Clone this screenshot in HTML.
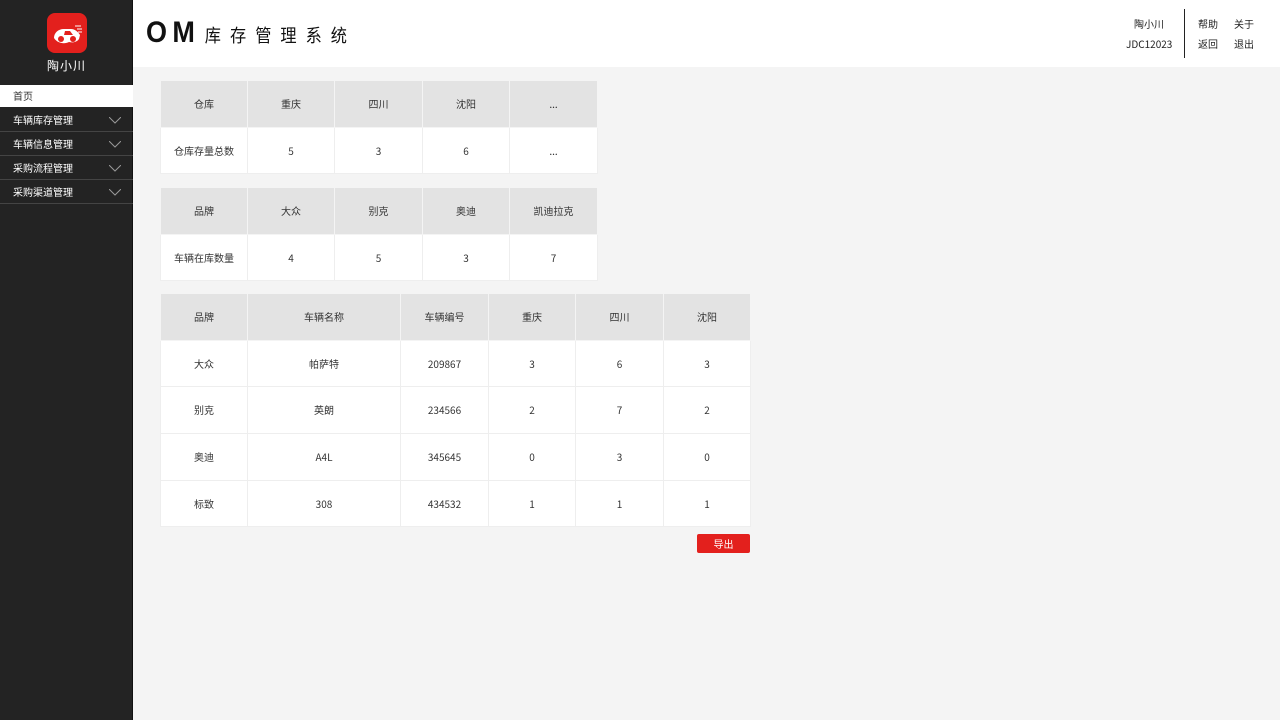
<!DOCTYPE html>
<html><head><meta charset="utf-8"><style>
*{margin:0;padding:0;box-sizing:border-box}
body{width:1280px;height:720px;overflow:hidden;background:#f4f4f4;font-family:"Noto Sans CJK SC",sans-serif;font-size:10px;color:#333;position:relative}
.side{position:absolute;left:0;top:0;width:133px;height:720px;background:#232323;border-right:1px solid #111}
.logo{position:absolute;left:47px;top:13px;width:40px;height:40px;background:#e3201d;border-radius:8px}
.brand{position:absolute;left:0;width:133px;top:57px;text-align:center;color:#fff;font-size:12px;letter-spacing:1px}
.home{position:absolute;left:0;top:85px;width:133px;height:22px;background:#fff;color:#333;padding-left:13px;line-height:22px}
.mi{position:absolute;left:0;width:133px;height:24px;border-bottom:1px solid #444;color:#fff;padding-left:13px;line-height:24px}
.mi svg{position:absolute;right:12px;top:9px}
.head{position:absolute;left:133px;top:0;width:1147px;height:67px;background:#fff}
.t{position:absolute;left:13px;top:17px;font-family:"Liberation Sans",sans-serif;font-size:30px;font-weight:bold;color:#111;line-height:32px;transform:scaleX(0.9);transform-origin:left}
.t b{letter-spacing:6px}
.t span{font-family:"Noto Sans CJK SC",sans-serif;font-size:18px;font-weight:normal;letter-spacing:10px;margin-left:5px}
.u{position:absolute;font-size:10px;color:#222;line-height:12px}
table{position:absolute;border-collapse:collapse;background:#fff;table-layout:fixed}
td{border:1px solid #eee;text-align:center;height:46.7px;font-size:10px;color:#333;vertical-align:middle;line-height:12px}
tr.h td{background:#e3e3e3;border-color:#f4f4f4}
.btn{position:absolute;left:697px;top:534px;width:53px;height:19px;background:#e3201d;border-radius:2px;color:#fff;text-align:center;line-height:19px;font-size:10px}
</style></head><body>
<div class="side">
<div class="logo"><svg width="40" height="40" viewBox="0 0 40 40"><path d="M7 25c0-5 4-9 10-9h7c4 0 7 3 9 6l-1 4c-2 3-6 4-10 3-4 2-11 2-15-4z" fill="#fff"/><circle cx="14" cy="26" r="3" fill="#e3201d"/><circle cx="26" cy="26" r="3" fill="#e3201d"/><path d="M18 18h5l3 4h-9z" fill="#e3201d"/><path d="M28 13h6M30 16h5M31 19h4" stroke="#fff" stroke-width="1"/></svg></div>
<div class="brand">陶小川</div>
<div class="home">首页</div>
<div class="mi" style="top:108px">车辆库存管理<svg width="12" height="7"><path d="M0 0l6 6 6-6" stroke="#999" fill="none"/></svg></div>
<div class="mi" style="top:132px">车辆信息管理<svg width="12" height="7"><path d="M0 0l6 6 6-6" stroke="#999" fill="none"/></svg></div>
<div class="mi" style="top:156px">采购流程管理<svg width="12" height="7"><path d="M0 0l6 6 6-6" stroke="#999" fill="none"/></svg></div>
<div class="mi" style="top:180px">采购渠道管理<svg width="12" height="7"><path d="M0 0l6 6 6-6" stroke="#999" fill="none"/></svg></div>
</div>
<div class="head">
<div class="t"><b>OM</b><span>库存管理系统</span></div>
<div class="u" style="left:1001px;top:18px">陶小川</div>
<div class="u" style="left:993px;top:38px">JDC12023</div>
<div style="position:absolute;left:1051px;top:9px;width:1px;height:49px;background:#222"></div>
<div class="u" style="left:1065px;top:18px">帮助</div>
<div class="u" style="left:1101px;top:18px">关于</div>
<div class="u" style="left:1065px;top:38px">返回</div>
<div class="u" style="left:1101px;top:38px">退出</div>
</div>
<table style="left:160px;top:80px;width:437px">
<colgroup><col style="width:87px"><col style="width:87px"><col style="width:88px"><col style="width:87px"><col style="width:88px"></colgroup>
<tr class="h"><td>仓库</td><td>重庆</td><td>四川</td><td>沈阳</td><td>...</td></tr>
<tr><td>仓库存量总数</td><td>5</td><td>3</td><td>6</td><td>...</td></tr>
</table>
<table style="left:160px;top:187px;width:437px">
<colgroup><col style="width:87px"><col style="width:87px"><col style="width:88px"><col style="width:87px"><col style="width:88px"></colgroup>
<tr class="h"><td>品牌</td><td>大众</td><td>别克</td><td>奥迪</td><td>凯迪拉克</td></tr>
<tr><td>车辆在库数量</td><td>4</td><td>5</td><td>3</td><td>7</td></tr>
</table>
<table style="left:160px;top:293px;width:590px">
<colgroup><col style="width:87px"><col style="width:153px"><col style="width:88px"><col style="width:87px"><col style="width:88px"><col style="width:87px"></colgroup>
<tr class="h"><td>品牌</td><td>车辆名称</td><td>车辆编号</td><td>重庆</td><td>四川</td><td>沈阳</td></tr>
<tr><td>大众</td><td>帕萨特</td><td>209867</td><td>3</td><td>6</td><td>3</td></tr>
<tr><td>别克</td><td>英朗</td><td>234566</td><td>2</td><td>7</td><td>2</td></tr>
<tr><td>奥迪</td><td>A4L</td><td>345645</td><td>0</td><td>3</td><td>0</td></tr>
<tr><td>标致</td><td>308</td><td>434532</td><td>1</td><td>1</td><td>1</td></tr>
</table>
<div class="btn">导出</div>
</body></html>
